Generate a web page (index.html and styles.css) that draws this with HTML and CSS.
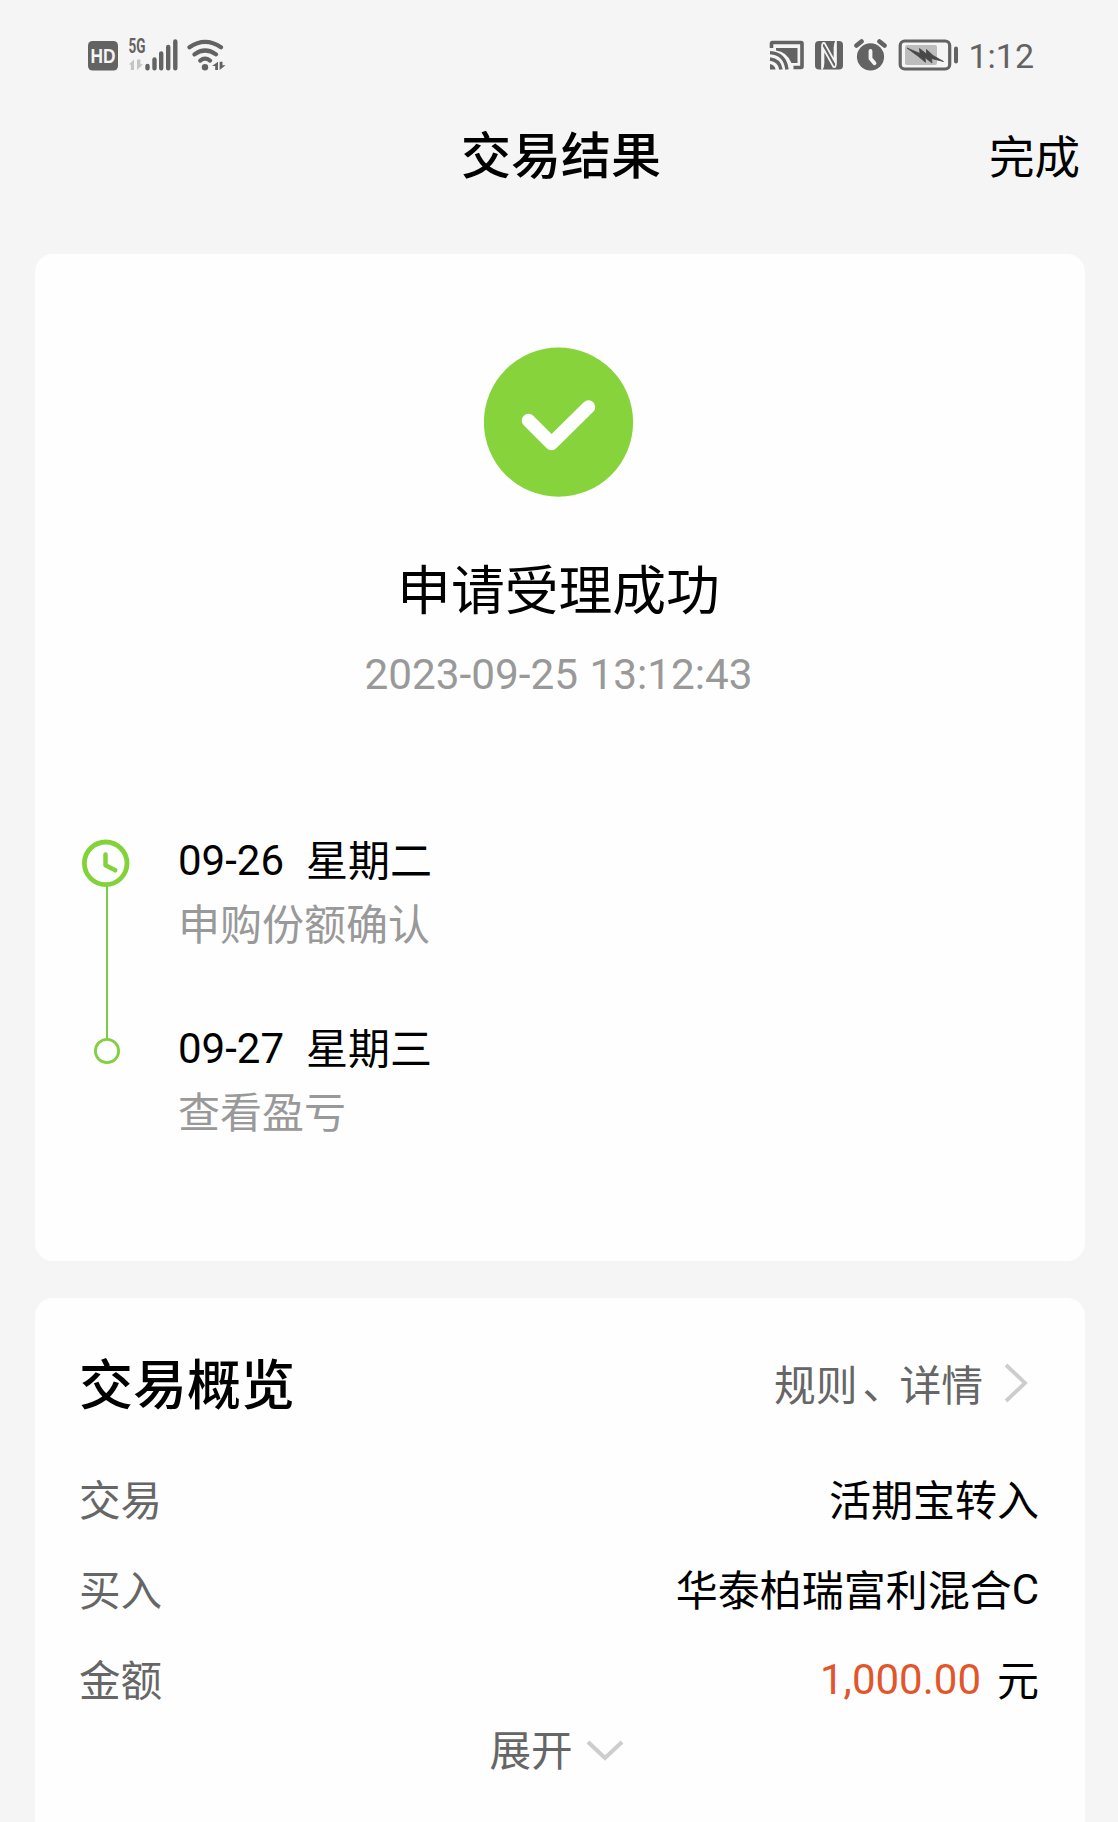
FILE: index.html
```html
<!DOCTYPE html>
<html lang="zh-CN">
<head>
<meta charset="utf-8">
<title>交易结果</title>
<link rel="stylesheet" href="styles.css">
</head>
<body>
<header class="status">
  <div class="status-group">
    <svg class="icon" width="30" height="32" viewBox="88 39 30 32">
      <rect x="88" y="41" width="30" height="29.5" rx="4.5" fill="#636363"/>
      <text class="hd" x="103" y="63" text-anchor="middle" textLength="25" lengthAdjust="spacingAndGlyphs">HD</text>
    </svg>
    <svg class="icon signal" width="50" height="48" viewBox="128 31 50 48">
      <text class="net" x="128.5" y="53.4" textLength="17" lengthAdjust="spacingAndGlyphs">5G</text>
      <path d="M134 59.5V70h-3.200v-5.500H128.800zM137 59.500V70l6-5.800h-2.600v-4.700z" fill="#c4c4c4"/>
      <path d="M147.5 66v2.2M154.5 59.5v8.7M161.2 53.5v14.7M168.2 47v21.2M175.3 41.5v26.7" stroke="#636363" stroke-width="4.4" stroke-linecap="round"/>
    </svg>
    <svg class="icon wifi" width="40" height="32" viewBox="187 39 40 32">
      <g fill="none" stroke="#636363" stroke-width="4.2" stroke-linecap="round">
        <path d="M189.5 47.3Q205 36.5 221 47.3M194.5 54.4Q205 46.6 216 54.4M200.3 60.6Q205 56.8 210 60.6"/>
      </g>
      <circle cx="205" cy="67.2" r="3.2" fill="#636363"/>
      <path d="M218 61.8V70h-2.800v-4H212zM219.6 61.8V70l6-4.8H222.500v-3.4z" fill="#636363"/>
    </svg>
  </div>
  <div class="status-group">
    <svg class="icon" width="35" height="32" viewBox="769.5 39 35 32">
      <path d="M772 48V43.5q0-1 1-1H801.5q1 0 1 1V66.5q0 1-1 1H794" fill="none" stroke="#636363" stroke-width="3.6"/>
      <path d="M776.5 48H798V63H792Q787 51.5 776.5 50.5z" fill="#636363"/>
      <path d="M770.5 52.6Q785.5 53.5 787.5 69.5M770.5 59Q780 60 781.5 69.5" fill="none" stroke="#636363" stroke-width="3.4"/>
      <path d="M770.5 64q5 1 5.500 5.500h-5.500z" fill="#636363"/>
    </svg>
    <svg class="icon nfc" width="28" height="32" viewBox="815.5 39 28 32">
      <rect x="815.5" y="41" width="28" height="28.5" rx="4" fill="#636363"/>
      <path d="M822.500 69V47q0-5 2.500-4L835 61V47.500q0-4.500 1.700-6.500M836.500 41V63q0 5-2.500 4L824 49V63q0 4.500-1.700 6.500" fill="none" stroke="#f5f5f5" stroke-width="1.700"/>
    </svg>
    <svg class="icon alarm" width="33" height="32" viewBox="854.5 39 33 32">
      <circle cx="871" cy="56.8" r="13.6" fill="#636363"/>
      <path d="M857 45.500l5-4M885 45.500l-5-4" stroke="#636363" stroke-width="4.6" stroke-linecap="round"/>
      <path d="M871 51v7.500l4 4.800" fill="none" stroke="#f5f5f5" stroke-width="3.8" stroke-linecap="round"/>
    </svg>
    <svg class="icon battery" width="61" height="32" viewBox="898.5 39 61 32">
      <rect x="900.7" y="41" width="49.5" height="28" rx="4.5" fill="none" stroke="#636363" stroke-width="3.2"/>
      <rect x="905.5" y="45" width="32" height="20" rx="2" fill="#bdbdbd"/>
      <path d="M907.5 48l13 5.500-.5-5 7 5.500v-4.500l6.500 6 10.500 6-12-3 .5 4.500-7-5.500.5 4.800-7-5.800z" fill="#484848" stroke="#484848" stroke-width=".8"/>
      <path d="M956.5 48.500v13" stroke="#636363" stroke-width="4" stroke-linecap="round"/>
    </svg>
    <span class="time">1:12</span>
  </div>
</header>

<nav class="titlebar">
  <h1 class="page-title">交易结果</h1>
  <a class="done">完成</a>
</nav>

<main class="content">
  <section class="card result">
    <svg class="success" width="150" height="150" viewBox="0 0 150 150">
      <circle cx="74.500" cy="75.200" r="74.600" fill="#87d33c"/>
      <path d="M44.500 73.500L67.500 96.500L104.500 60" fill="none" stroke="#fff" stroke-width="13.5" stroke-linecap="round" stroke-linejoin="round"/>
    </svg>
    <h2 class="result-title">申请受理成功</h2>
    <p class="result-time">2023-09-25 13:12:43</p>
    <div class="timeline">
      <svg class="rail" width="50" height="240" viewBox="0 0 50 240">
        <path d="M26 48V202" stroke="#7acb45" stroke-width="2"/>
        <circle cx="24.7" cy="25.3" r="21.3" fill="#fff" stroke="#82d23a" stroke-width="4.8"/>
        <path d="M24.5 16.500v10.800l9.800 5" fill="none" stroke="#82d23a" stroke-width="4.5" stroke-linecap="round" stroke-linejoin="round"/>
        <circle cx="26" cy="213" r="11.6" fill="#fff" stroke="#82cf43" stroke-width="2.8"/>
      </svg>
      <ol class="steps">
        <li class="step">
          <p class="step-date"><span class="digits">09-26</span><span>星期二</span></p>
          <p class="step-note">申购份额确认</p>
        </li>
        <li class="step">
          <p class="step-date"><span class="digits">09-27</span><span>星期三</span></p>
          <p class="step-note">查看盈亏</p>
        </li>
      </ol>
    </div>
  </section>

  <section class="card overview">
    <div class="overview-head">
      <h2 class="overview-title">交易概览</h2>
      <a class="rules"><span>规则<span class="comma">、</span>详情</span>
        <svg width="24" height="40" viewBox="0 0 24 40"><path d="M2 2L21 20L2 38" fill="none" stroke="#cdcdcd" stroke-width="3.8"/></svg>
      </a>
    </div>
    <dl class="rows">
      <div class="row"><dt>交易</dt><dd>活期宝转入</dd></div>
      <div class="row"><dt>买入</dt><dd class="fund">华泰柏瑞富利混合<span class="digits">C</span></dd></div>
      <div class="row"><dt>金额</dt><dd><span class="amount">1,000.00</span><span>元</span></dd></div>
    </dl>
    <div class="expand">展开
      <svg width="38" height="22" viewBox="0 0 38 22"><path d="M2 2L19 18L36 2" fill="none" stroke="#cdcdcd" stroke-width="4"/></svg>
    </div>
  </section>
</main>
</body>
</html>
```
FILE: styles.css
```css
* { box-sizing: border-box; margin: 0; padding: 0; }

body {
  height: 1822px;
  overflow: hidden;
  display: flex;
  flex-direction: column;
  background: #f5f5f5;
  color: #000;
  font-family: Roboto, "Noto Sans CJK SC", sans-serif;
  font-size: 42px;
  line-height: 60px;
}

.status {
  display: flex;
  justify-content: space-between;
  height: 112px;
  padding: 39px 84px 0 88px;
}
.status-group { display: flex; height: 32px; align-items: center; }
.icon { display: block; flex: none; }
.hd { font: 700 20px "Liberation Sans", sans-serif; fill: #f5f5f5; }
.net { font: 700 20px Roboto, sans-serif; fill: #636363; }
.signal { margin-left: 10px; }
.wifi { margin-left: 9px; }
.nfc { margin-left: 10.5px; }
.alarm { margin-left: 11px; }
.battery { margin-left: 11.5px; }
.time {
  margin: 2px 0 0 9px;
  color: #636363;
  font-size: 34px;
  line-height: 32px;
}

.titlebar {
  display: grid;
  grid-template-columns: 1fr auto 1fr;
  align-items: center;
  height: 90px;
  padding: 0 38px 0 42px;
}
.page-title { grid-column: 2; font-size: 50px; font-weight: 500; }
.done { justify-self: end; margin-top: 3px; font-size: 45.5px; }

.content {
  flex: 1;
  display: flex;
  flex-direction: column;
  gap: 37px;
  padding: 52px 33px 0 35px;
}
.card { background: #fefefe; border-radius: 18px; }

.result {
  height: 1007px;
  flex: none;
  display: flex;
  flex-direction: column;
  align-items: center;
  padding: 93px 48px 0 45px;
}
.success { display: block; }
.result-title {
  margin-top: 55px;
  font-size: 53.8px;
  font-weight: 400;
  line-height: 80px;
}
.result-time { margin-top: 13px; color: #999; font-size: 42.3px; word-spacing: 1px; }

.timeline { align-self: stretch; display: flex; gap: 47px; margin-top: 133px; padding-left: 1px; }
.rail { flex: none; }
.steps {
  list-style: none;
  display: flex;
  flex-direction: column;
  gap: 64px;
  margin-top: -6px;
}
.step-date { display: flex; gap: 22px; }
.step-note { margin-top: 4px; color: #999; }
.step-date .digits { margin-top: -1px; }

.overview {
  flex: 1;
  border-radius: 18px 18px 0 0;
  padding: 49px 46px 0 44px;
}
.overview-head {
  display: flex;
  justify-content: space-between;
  align-items: center;
  height: 80px;
}
.overview-title { font-size: 54px; font-weight: 500; }
.rules {
  display: flex;
  align-items: center;
  gap: 21px;
  padding-right: 11px;
  color: #666;
  font-size: 41.8px;
}
.rules svg { margin-top: -9px; }
.comma { padding-left: 5px; margin-right: -5px; vertical-align: 2px; line-height: 1; }
.rows { margin-top: 30px; }
.row { display: flex; justify-content: space-between; height: 90px; align-items: center; }
.row dt { color: #666; font-size: 41.6px; }
.row dd { display: flex; gap: 16px; }
.row .fund { gap: 0; }
.fund .digits { margin-top: -2px; }
.amount { margin-top: -2px; color: #e2562c; }
.expand {
  display: flex;
  justify-content: center;
  align-items: center;
  gap: 13px;
  margin-top: -5px;
  padding-right: 5px;
  color: #666;
  font-size: 41.6px;
}
.expand svg { margin-top: -2px; }
```
